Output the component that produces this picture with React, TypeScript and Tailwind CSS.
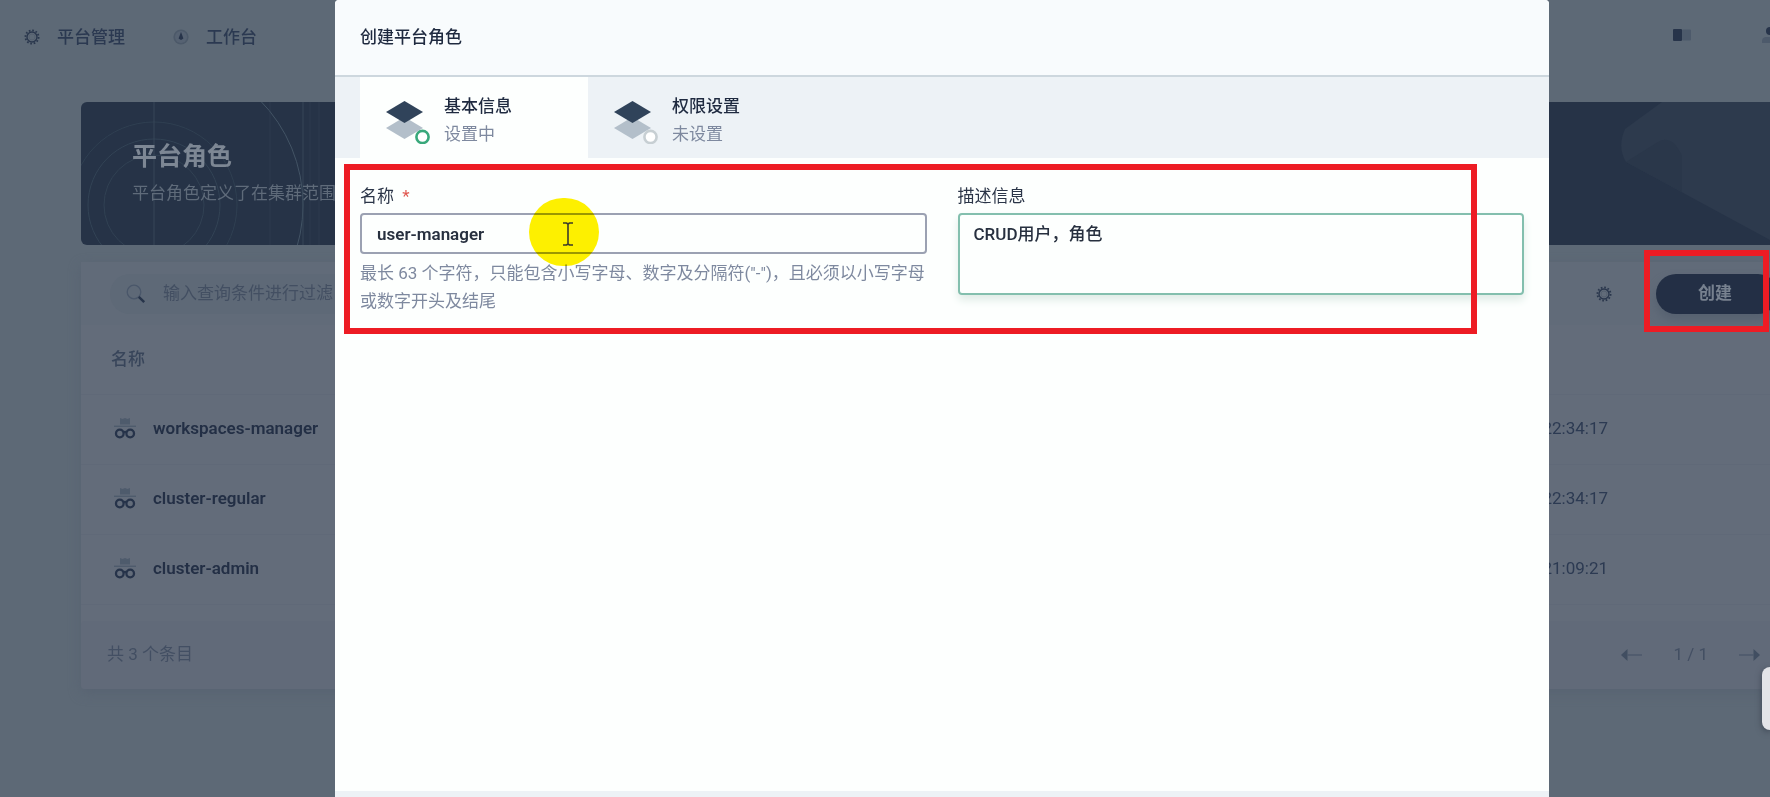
import type { ReactNode } from 'react';

const roles = [
  { name: 'workspaces-manager', time: '22:34:17' },
  { name: 'cluster-regular', time: '22:34:17' },
  { name: 'cluster-admin', time: '21:09:21' },
];

function GearIcon() {
  return (
    <svg className="h-4 w-4" viewBox="0 0 16 16" fill="none">
      <circle cx="8" cy="8" r="6.6" stroke="#2a374d" strokeWidth="1.8" strokeDasharray="1.7 1.756" />
      <circle cx="8" cy="8" r="5" stroke="#2a374d" strokeWidth="1.4" />
      <circle cx="8" cy="8" r="3" stroke="#55606f" strokeWidth="1" />
    </svg>
  );
}

function CompassIcon() {
  return (
    <svg className="h-4 w-4" viewBox="0 0 16 16">
      <circle cx="8" cy="8" r="7.6" fill="#4c5969" />
      <circle cx="8" cy="8" r="6" fill="#566272" />
      <path d="M8 3 10.4 9.4 8 11 5.6 9.4z" fill="#27344a" />
    </svg>
  );
}

function BookIcon() {
  return (
    <svg className="h-3 w-5" viewBox="0 0 20 12">
      <rect x="1" width="9" height="12" rx="1" fill="#27344a" />
      <rect x="10" y="0.5" width="9" height="11" rx="1" fill="#4d5a6b" />
    </svg>
  );
}

function UserIcon() {
  return (
    <svg className="h-4 w-4" viewBox="0 0 16 16">
      <circle cx="8" cy="4" r="4" fill="#27344a" />
      <path d="M0 16v-2c0-3 2-4 4-4h8c2 0 4 1 4 4v2z" fill="#4d5a6b" />
    </svg>
  );
}

function SearchIcon() {
  return (
    <svg className="h-5 w-5 shrink-0" viewBox="0 0 20 20" fill="none">
      <circle cx="8" cy="8" r="6.8" stroke="#4a576a" strokeWidth="1.3" />
      <path d="m12.8 12.8 5.400 5.400" stroke="#27344a" strokeWidth="2.4" />
    </svg>
  );
}

function RoleIcon() {
  return (
    <svg className="h-6 w-6 shrink-0" viewBox="0 0 24 24" fill="none">
      <path d="M7 1 9.5 2 12 1l2.500 1L17 1v6.500H7z" fill="#4e5b6c" />
      <path d="M1 9.300h22" stroke="#4e5b6c" strokeWidth="1.400" />
      <circle cx="6.800" cy="16.500" r="3.800" stroke="#26334a" strokeWidth="2.300" />
      <circle cx="17.200" cy="16.500" r="3.800" stroke="#26334a" strokeWidth="2.300" />
      <path d="M10 15.500c1.300-1 2.700-1 4 0" stroke="#26334a" strokeWidth="2" />
    </svg>
  );
}

function ArrowIcon({ className }: { className?: string }) {
  return (
    <svg className={`h-3 w-[21px] ${className ?? ''}`} viewBox="0 0 21 12">
      <path d="M6.500 0v12L0 6z" fill="#414e61" />
      <path d="M6 6h15" stroke="#4d596b" strokeWidth="1.500" />
    </svg>
  );
}

function LayersIcon({ active }: { active: boolean }) {
  return (
    <svg className="h-12 w-12 shrink-0" viewBox="0 0 48 48">
      <path d="M0 32 18.500 21 37 32 18.500 43z" fill="#b3bfca" />
      <path d="M0 16 18.500 5 37 16 18.500 27z" fill="#30435a" />
      <circle cx="36.500" cy="41" r="6.100" fill="#fff" stroke={active ? '#39a87b' : '#c7cfd3'} strokeWidth="2.600" />
    </svg>
  );
}

function StepTab({ title, status, active = false }: { title: string; status: string; active?: boolean }) {
  return (
    <button
      type="button"
      className={`flex h-[81px] w-[228px] items-center gap-[10px] pt-1 pl-[26px] text-left ${active ? 'bg-[#fdfffe]' : ''}`}
    >
      <LayersIcon active={active} />
      <span className="flex flex-col leading-7">
        <span className="font-medium text-[#1f2a40]">{title}</span>
        <span className="text-[#7e899f]">{status}</span>
      </span>
    </button>
  );
}

function NavLink({ icon, children }: { icon: ReactNode; children: ReactNode }) {
  return (
    <a href="#" className="flex items-center gap-[17px] font-medium text-[#2b3951]">
      {icon}
      {children}
    </a>
  );
}

function Banner() {
  return (
    <section className="relative h-[143px] overflow-hidden rounded-l-md bg-[#263347] pt-[37px] pl-[51px]">
      <svg className="absolute top-0 left-0 h-full w-64" viewBox="0 0 256 143" fill="none" stroke="#364759">
        <circle cx="73" cy="103" r="50" opacity="0.7" />
        <circle cx="73" cy="103" r="66" opacity="0.8" />
        <circle cx="73" cy="103" r="83" opacity="0.6" />
        <circle cx="73" cy="103" r="149" stroke="#435465" />
        <path d="M73 0v143M222 0v143" />
        <path d="M189 0v143M238 0v143M229 0v143" opacity="0.4" />
      </svg>
      <svg className="absolute top-0 right-0 h-full w-[150px]" viewBox="0 0 150 143">
        <path d="M42 0 5 27Q-3 45 6 60L150 138V0z" fill="#2d3a4d" />
        <path d="M6 60 38 40Q52 32 62 54V90z" fill="#2a374a" />
      </svg>
      <div className="relative">
        <h1 className="text-[25px] leading-9 font-bold text-[#7d8794]">平台角色</h1>
        <p className="mt-1 leading-7 text-[#5f6b7a]">平台角色定义了在集群范围</p>
      </div>
    </section>
  );
}

function RoleList() {
  return (
    <section className="mt-[17px] rounded-l bg-[#636c7a] shadow-[0_4px_12px_#586372]">
      <div className="flex h-[63px] items-center bg-[#616b79] pl-[29px]">
        <div className="flex h-10 flex-1 items-center gap-[17px] rounded-full bg-[#5e6977] pl-4">
          <SearchIcon />
          <input
            aria-label="查询条件"
            placeholder="输入查询条件进行过滤"
            className="w-full bg-transparent outline-none placeholder:text-[#434f62]"
          />
        </div>
        <button type="button" aria-label="设置" className="mr-11 ml-16">
          <GearIcon />
        </button>
        <button
          type="button"
          className="-mr-2 h-10 w-[122px] shrink-0 rounded-full bg-[#232f45] pr-1 font-bold text-[#77818f] shadow-[0_6px_10px_#566170]"
        >
          创建
        </button>
      </div>
      <table className="w-full text-left text-[#2c3a52]">
        <thead>
          <tr className="h-[69px] border-b border-[#606978]">
            <th scope="col" className="pl-[30px] font-medium text-[#38455a]">
              名称
            </th>
            <th scope="col" aria-label="创建时间" />
          </tr>
        </thead>
        <tbody>
          {roles.map((role) => (
            <tr key={role.name} className="h-[70px] border-b border-[#606978]">
              <td className="pl-8">
                <span className="flex items-center gap-4 font-semibold text-[#232f45]">
                  <RoleIcon />
                  {role.name}
                </span>
              </td>
              <td className="pr-[162px] text-right">{role.time}</td>
            </tr>
          ))}
        </tbody>
      </table>
      <footer className="mt-4 flex h-[68px] items-center justify-between rounded-l bg-[#616a79] pr-[10px] pl-[26px] text-[#434f63]">
        <span>共 3 个条目</span>
        <nav className="flex items-center gap-[31px]">
          <button type="button" aria-label="上一页">
            <ArrowIcon />
          </button>
          <span>1 / 1</span>
          <button type="button" aria-label="下一页">
            <ArrowIcon className="rotate-180" />
          </button>
        </nav>
      </footer>
    </section>
  );
}

function CreateRoleDialog() {
  return (
    <div
      role="dialog"
      aria-labelledby="dialog-title"
      className="relative flex min-h-full flex-1 flex-col rounded-t bg-[#fdfffe]"
    >
      <header className="flex h-[77px] items-center rounded-t border-b-2 border-[#cdd7de] bg-[#f8fbfd] px-[25px]">
        <h2 id="dialog-title" className="font-medium text-[#1f2a40]">
          创建平台角色
        </h2>
      </header>
      <div className="flex bg-[#edf2f6] px-[25px]">
        <StepTab title="基本信息" status="设置中" active />
        <StepTab title="权限设置" status="未设置" />
      </div>

      <form className="grid flex-1 grid-cols-2 content-start gap-[31px] px-[25px] pt-6">
        <div>
          <label htmlFor="role-name" className="block h-[31px] leading-7 text-[#2b3548]">
            名称 <span className="ml-1 text-[#e0574f]">*</span>
          </label>
          <input
            id="role-name"
            defaultValue="user-manager"
            className="block h-[41px] w-full rounded border-2 border-[#9ba1b2] bg-transparent px-[15px] font-semibold text-[#27303f] outline-none"
          />
          <p className="mt-[5px] leading-7 text-[#7e899f]">
            最长 63 个字符，只能包含小写字母、数字及分隔符("-")，且必须以小写字母或数字开头及结尾
          </p>
        </div>
        <div>
          <label htmlFor="role-desc" className="block h-[31px] leading-7 text-[#2b3548]">
            描述信息
          </label>
          <textarea
            id="role-desc"
            defaultValue="CRUD用户，角色"
            className="block h-[82px] w-full resize-none rounded border-2 border-[#83bfae] bg-transparent px-[14px] py-[5px] leading-7 font-medium text-[#27303f] shadow-[0_5px_9px_#dfebe6] outline-none"
          />
        </div>
      </form>
      <div className="h-[6px] bg-[#edf2f6]" />

      {/* pointer highlight and marked area */}
      <div className="pointer-events-none absolute top-[198px] left-[194px] h-[68px] w-[70px] rounded-full bg-[#fff000] mix-blend-multiply" />
      <svg
        className="pointer-events-none absolute top-[222px] left-[228px] h-6 w-[10px]"
        viewBox="0 0 10 24"
        fill="none"
        stroke="#3b3a2a"
        strokeWidth="1.600"
      >
        <path d="M0 1h3.500L5 2l1.500-1H10M5 2v20M0 23h3.500L5 22l1.500 1H10" />
      </svg>
      <div className="pointer-events-none absolute top-[164px] right-[72px] left-[9px] h-[170px] border-[6px] border-[#ed1c24]" />
    </div>
  );
}

export default function App() {
  return (
    <div className="relative h-screen overflow-hidden bg-[#5d6976] font-[Roboto,'Noto_Sans_CJK_SC',sans-serif] text-[17px]">
      <header className="flex h-[102px] items-start justify-between pt-[23px] pl-6">
        <nav className="flex gap-12 leading-7">
          <NavLink icon={<GearIcon />}>平台管理</NavLink>
          <NavLink icon={<CompassIcon />}>工作台</NavLink>
        </nav>
        <div className="-mr-2 flex items-center gap-[70px]">
          <a href="#" aria-label="文档" className="py-[6px]">
            <BookIcon />
          </a>
          <a href="#" aria-label="用户">
            <UserIcon />
          </a>
        </div>
      </header>
      <main className="pl-[81px]">
        <Banner />
        <RoleList />
      </main>

      <div className="absolute inset-0 flex pr-[221px] pl-[335px]">
        <CreateRoleDialog />
      </div>

      <div className="pointer-events-none absolute top-[250px] right-[1px] h-[82px] w-[125px] border-[6px] border-[#ed1c24]" />
      <div className="absolute top-[667px] right-0 h-[63px] w-2 rounded-l-xl bg-[#e3e4e8] shadow-[0_2px_6px_#3d4653]" />
    </div>
  );
}
